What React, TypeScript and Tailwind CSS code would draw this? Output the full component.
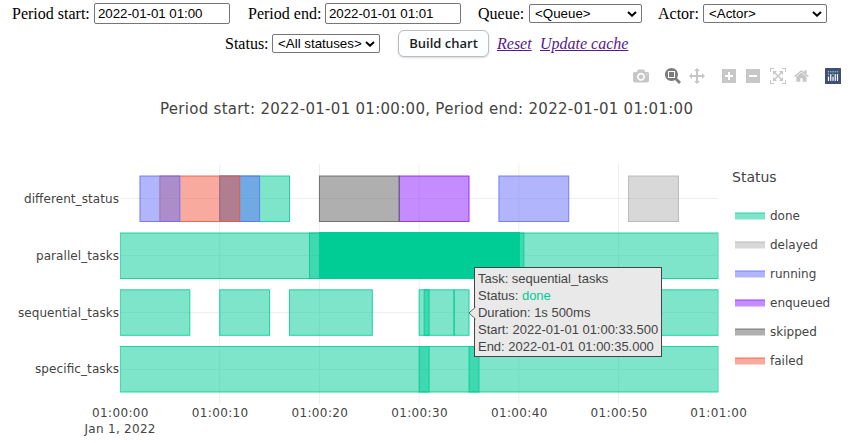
import React from 'react';

type Status = 'done' | 'delayed' | 'running' | 'enqueued' | 'skipped' | 'failed';

const COLORS: Record<Status, string> = {
  done: '#00cc96',
  delayed: '#b2b2b2',
  running: '#636efa',
  enqueued: '#8c1aff',
  skipped: '#606060',
  failed: '#ef553b',
};

const STATUSES: Status[] = ['done', 'delayed', 'running', 'enqueued', 'skipped', 'failed'];

const TASKS = ['different_status', 'parallel_tasks', 'sequential_tasks', 'specific_tasks'];
const TASK_WIDTHS = [95, 83, 101, 84];

// [row, status, start second, end second], in drawing order
const BARS: [number, Status, number, number][] = [
  [0, 'done', 10, 17],
  [0, 'delayed', 51, 56],
  [0, 'running', 10, 14],
  [0, 'running', 38, 45],
  [0, 'enqueued', 28, 35],
  [0, 'skipped', 20, 28],
  [0, 'failed', 4, 12],
  [0, 'running', 2, 6],
  [1, 'done', 0, 60],
  [1, 'done', 19, 40.5],
  [2, 'done', 0, 7],
  [2, 'done', 10, 15],
  [2, 'done', 17, 25.3],
  [2, 'done', 30, 31],
  [2, 'done', 30.5, 33.5],
  [2, 'done', 33.5, 35],
  [2, 'done', 37, 60],
  [3, 'done', 0, 60],
  [3, 'done', 30, 31],
  [3, 'done', 35, 36],
];

const TICKS = ['01:00:00', '01:00:10', '01:00:20', '01:00:30', '01:00:40', '01:00:50', '01:01:00'];

const LEFT = 120;
const xAt = (s: number) => LEFT + s * 9.972;
const ROW_TOPS = [16, 73, 129.8, 186.5];
const ROW_MIDS = [38.5, 95.5, 152.5, 209.5];
const LABEL_BASELINES = [42.5, 99.5, 156.5, 213];

const ICONS = {
  camera:
    'm500 450c-83 0-150-67-150-150 0-83 67-150 150-150 83 0 150 67 150 150 0 83-67 150-150 150z m400 150h-120c-16 0-34 13-39 29l-31 93c-6 15-23 28-40 28h-340c-16 0-34-13-39-28l-31-94c-6-15-23-28-40-28h-120c-55 0-100-45-100-100v-450c0-55 45-100 100-100h800c55 0 100 45 100 100v450c0 55-45 100-100 100z m-400-550c-138 0-250 112-250 250 0 138 112 250 250 250 138 0 250-112 250-250 0-138-112-250-250-250z m365 380c-19 0-35 16-35 35 0 19 16 35 35 35 19 0 35-16 35-35 0-19-16-35-35-35z',
  zoom: 'm1000-25l-250 251c40 63 63 138 63 218 0 224-182 406-407 406-224 0-406-182-406-406s183-406 407-406c80 0 155 22 218 62l250-250 125 125z m-812 250l0 438 437 0 0-438-437 0z m62 375l313 0 0-312-313 0 0 312z',
  pan: 'm1000 350l-187 188 0-125-250 0 0 250 125 0-188 187-187-187 125 0 0-250-250 0 0 125-188-188 186-187 0 125 252 0 0-250-125 0 187-188 188 188-125 0 0 250 250 0 0-126 187 188z',
  plus: 'm1 787l0-875 875 0 0 875-875 0z m687-500l-187 0 0-187-125 0 0 187-188 0 0 125 188 0 0 187 125 0 0-187 187 0 0-125z',
  minus: 'm0 788l0-876 875 0 0 876-875 0z m688-500l-500 0 0 125 500 0 0-125z',
  autoscale:
    'm250 850l-187 0-63 0 0-62 0-188 63 0 0 188 187 0 0 62z m688 0l-188 0 0-62 188 0 0-188 62 0 0 188 0 62-62 0z m-875-938l0 188-63 0 0-188 0-62 63 0 187 0 0 62-187 0z m875 188l0-188-188 0 0-62 188 0 62 0 0 62 0 188-62 0z m-125 188l-1 0-93-94-156 156 156 156 92-93 2 0 0 250-250 0 0-2 93-92-156-156-156 156 94 92 0 2-250 0 0-250 0 0 93 93 157-156-157-156-93 94 0 0 0-250 250 0 0 0-94 93 156 157 156-157-93-93 0 0 250 0 0 250z',
  home: 'm786 296v-267q0-15-11-26t-25-10h-214v214h-143v-214h-214q-15 0-25 10t-11 26v267q0 1 0 2t0 2l321 264 321-264q1-1 1-4z m124 39l-34-41q-5-5-12-6h-2q-7 0-12 3l-386 322-386-322q-7-4-13-4-7 2-12 7l-35 41q-4 5-3 12t6 11l401 334q18 15 42 15t43-15l136-114v109q0 8 5 13t13 5h107q8 0 13-5t5-13v-227l122-102q5-5 6-12t-4-13z',
};

function BarIcon({ name, active = false }: { name: keyof typeof ICONS; active?: boolean }) {
  return (
    <svg viewBox="0 0 1000 1000" className={active ? 'h-4 w-4 fill-[#7c7c7c]' : 'h-4 w-4 fill-[#c7c7c7]'}>
      <path d={ICONS[name]} transform="matrix(1 0 0 -1 0 850)" />
    </svg>
  );
}

function Logo() {
  const cols = [3.5, 5.75, 8, 10.25, 12.5];
  const bars = [8.4, 6, 8.4, 6, 6];
  return (
    <svg viewBox="0 0 16 16" className="h-4 w-4">
      <rect width="16" height="16" rx="0.6" fill="#3f4f75" />
      {cols.map((x, i) => (
        <g key={x}>
          <rect x={x - 0.6} y={bars[i]} width="1.2" height={13 - bars[i]} rx="0.4" fill="#fff" />
          <circle cx={x} cy="3.7" r="0.75" fill="#80cfbe" />
        </g>
      ))}
      <circle cx="3.5" cy="6.3" r="0.75" fill="#80cfbe" />
      <circle cx="8" cy="6.3" r="0.75" fill="#80cfbe" />
    </svg>
  );
}

function Picker({ label, className }: { label: string; className: string }) {
  return (
    <div className={`flex h-[19px] items-center justify-between rounded-[2px] border border-[#767676] bg-white pl-[5px] pr-1 font-['Liberation_Sans',Arial,sans-serif] text-[13.33px] leading-none ${className}`}>
      <span className="whitespace-nowrap">{label}</span>
      <svg viewBox="0 0 10 6" className="h-1.5 w-2.5">
        <path d="M1 1 L5 4.7 L9 1" fill="none" stroke="#000" strokeWidth="2" />
      </svg>
    </div>
  );
}

function TextBox({ value }: { value: string }) {
  return (
    <input
      defaultValue={value}
      className="h-[21px] w-[136px] rounded-[2px] border border-[#767676] bg-white px-[3px] font-['Liberation_Sans',Arial,sans-serif] text-[13.33px] tracking-[-0.05px] text-black"
    />
  );
}

function Controls() {
  return (
    <div className="font-['Liberation_Serif','Times_New_Roman',serif] text-base leading-[18px] text-black">
      <div className="flex h-[27px] items-center pl-3">
        <span className="w-[82px] whitespace-nowrap">Period start:</span>
        <TextBox value="2022-01-01 01:00" />
        <span className="ml-[18px] w-[77px] whitespace-nowrap">Period end:</span>
        <TextBox value="2022-01-01 01:01" />
        <span className="ml-[17px] w-[51px] whitespace-nowrap">Queue:</span>
        <Picker label="<Queue>" className="w-[113px]" />
        <span className="ml-4 w-[45px] whitespace-nowrap">Actor:</span>
        <Picker label="<Actor>" className="w-[124px]" />
      </div>
      <div className="flex h-[33px] items-center pl-[225px]">
        <span className="w-[47px] whitespace-nowrap">Status:</span>
        <Picker label="<All statuses>" className="w-[108px]" />
        <button className="ml-[18px] h-[27px] w-[91px] whitespace-nowrap rounded-md border border-[#bdbdbd] bg-[#fcfeff] font-['Open_Sans',sans-serif] text-[13px] font-semibold leading-none text-[#1b1f24] shadow-[0_1px_2px_rgba(0,0,0,0.15)]">
          Build chart
        </button>
        <a className="ml-2 w-[43px] italic text-[#551a8b] underline">Reset</a>
        <a className="whitespace-nowrap italic text-[#551a8b] underline">Update cache</a>
      </div>
    </div>
  );
}

function Modebar() {
  return (
    <div className="flex h-8 items-center pl-[633px]">
      <BarIcon name="camera" />
      <div className="ml-4 flex gap-2">
        <BarIcon name="zoom" active />
        <BarIcon name="pan" />
      </div>
      <div className="ml-[17px] flex gap-2">
        <BarIcon name="plus" />
        <BarIcon name="minus" />
        <BarIcon name="autoscale" />
        <BarIcon name="home" />
      </div>
      <div className="ml-[15px]">
        <Logo />
      </div>
    </div>
  );
}

function Timeline() {
  return (
    <svg width="725" height="283" viewBox="0 0 725 283" className="block shrink-0 overflow-visible font-['DejaVu_Sans',Verdana,sans-serif] text-xs">
      <defs>
        <clipPath id="plot">
          <rect x="120" y="0" width="598.5" height="245" />
        </clipPath>
      </defs>
      <g stroke="#eeeeee">
        {[10, 20, 30, 40, 50].map((s) => (
          <line key={s} x1={xAt(s)} x2={xAt(s)} y1="4" y2="244" />
        ))}
        {ROW_MIDS.map((y) => (
          <line key={y} x1="120" x2="718" y1={y} y2={y} />
        ))}
      </g>
      <g clipPath="url(#plot)">
        {BARS.map(([row, status, from, to], i) => (
          <rect
            key={i}
            x={xAt(from)}
            y={ROW_TOPS[row]}
            width={xAt(to) - xAt(from)}
            height="45.5"
            fill={COLORS[status]}
            fillOpacity="0.5"
            stroke={COLORS[status]}
            strokeOpacity="0.85"
          />
        ))}
        <rect x={xAt(20) - 0.5} y="72" width="201" height="47" fill="#00cc96" />
      </g>
      <g fill="#444444">
        {TASKS.map((t, i) => (
          <text key={t} x={119 - TASK_WIDTHS[i]} y={LABEL_BASELINES[i]} textLength={TASK_WIDTHS[i]}>
            {t}
          </text>
        ))}
        {TICKS.map((t, i) => (
          <text key={t} x={xAt(i * 10) - 28} y="257" textLength="56.5">
            {t}
          </text>
        ))}
        <text x="84.5" y="273" textLength="71">
          Jan 1, 2022
        </text>
      </g>
    </svg>
  );
}

function Legend() {
  return (
    <div className="font-['DejaVu_Sans',Verdana,sans-serif] text-xs text-[#444444]">
      <div className="ml-[7px] mt-2 text-[14px] leading-[18px]">Status</div>
      <ul className="mt-[15px]">
        {STATUSES.map((s) => (
          <li key={s} className="flex h-[29px] items-center gap-1 pl-[10px]">
            <svg width="31" height="8">
              <rect y="0.5" width="30" height="7" fill={COLORS[s]} fillOpacity="0.5" />
              <rect y="0.5" width="30" height="1.5" fill={COLORS[s]} fillOpacity="0.4" />
            </svg>
            <span>{s}</span>
          </li>
        ))}
      </ul>
    </div>
  );
}

function Tooltip() {
  return (
    <div className="absolute left-[474px] top-[107px] h-[90px] w-[188px] border border-[#444444] bg-[#e9e9e9] pl-[3px] pt-[2px] font-['Liberation_Sans',Arial,sans-serif] text-[13px] leading-[17px] tracking-[-0.02px] text-[#444444]">
      <svg width="8" height="14" className="absolute -left-[7px] top-[38px]">
        <path d="M8 0.5 L7 1.5 L1 7 L7 12.5 L8 13.5 Z" fill="#e9e9e9" />
        <path d="M7.5 1 L1 7 L7.5 13" fill="none" stroke="#666" />
      </svg>
      <div>Task: sequential_tasks</div>
      <div>
        Status: <span className="text-[#00cc96]">done</span>
      </div>
      <div>Duration: 1s 500ms</div>
      <div className="whitespace-nowrap">Start: 2022-01-01 01:00:33.500</div>
      <div className="whitespace-nowrap">End: 2022-01-01 01:00:35.000</div>
    </div>
  );
}

export default function App() {
  return (
    <div className="h-[443px] w-[856px] overflow-hidden bg-white">
      <Controls />
      <Modebar />
      <svg width="856" height="68" className="block font-['DejaVu_Sans',Verdana,sans-serif] text-[15px]">
        <text x="160" y="22" textLength="533" fill="#444444">
          Period start: 2022-01-01 01:00:00, Period end: 2022-01-01 01:01:00
        </text>
      </svg>
      <div className="relative flex">
        <Timeline />
        <Legend />
        <Tooltip />
      </div>
    </div>
  );
}
